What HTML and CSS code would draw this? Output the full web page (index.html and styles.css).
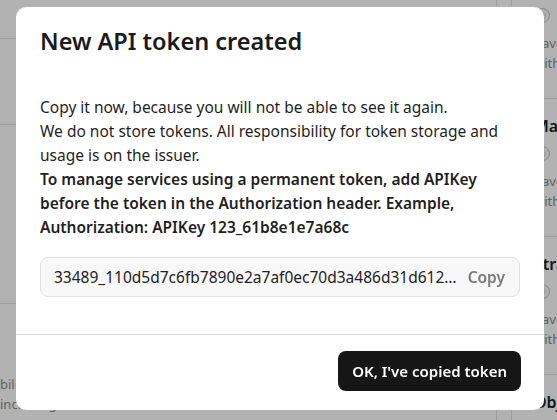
FILE: index.html
```html
<!DOCTYPE html>
<html lang="en">
<head>
<meta charset="utf-8">
<title>New API token created</title>
<link rel="stylesheet" href="styles.css">
</head>
<body>
<div class="page">
  <div class="left-panel">
    <div class="left-row row-a"></div>
    <div class="left-row row-b"></div>
    <div class="left-row row-c"></div>
    <div class="left-row row-d">
      <p class="muted">bility of the token owner</p>
      <p class="muted">including them all</p>
    </div>
  </div>
  <div class="right-col">
    <div class="card card-first">
      <span class="radio"></span>
      <p class="muted">have access</p>
      <p class="muted">with tokens</p>
    </div>
    <div class="card">
      <h3 class="card-title">Manage</h3>
      <span class="radio"></span>
      <p class="muted">have access</p>
      <p class="muted">with tokens</p>
    </div>
    <div class="card">
      <h3 class="card-title">Strategy</h3>
      <span class="radio"></span>
      <p class="muted">have access</p>
      <p class="muted">with tokens</p>
    </div>
    <div class="card">
      <h3 class="card-title">Objects</h3>
      <span class="radio"></span>
    </div>
  </div>
</div>

<div class="overlay">
  <div class="modal" role="dialog" aria-labelledby="modal-title">
    <div class="modal-header">
      <h2 class="modal-title" id="modal-title">New API token created</h2>
    </div>
    <div class="modal-body">
      <p class="note">Copy it now, because you will not be able to see it again.</p>
      <p class="note">We do not store tokens. All responsibility for token storage and usage is on the issuer.</p>
      <p class="note strong">To manage services using a permanent token, add APIKey before the token in the Authorization header. Example, Authorization: APIKey 123_61b8e1e7a68c</p>
      <div class="token-field">
        <span class="token-value">33489_110d5d7c6fb7890e2a7af0ec70d3a486d31d6125e8f0a4b7c9</span>
        <button class="copy-btn" type="button">Copy</button>
      </div>
    </div>
    <div class="modal-footer">
      <button class="primary-btn" type="button">OK, I've copied token</button>
    </div>
  </div>
</div>
</body>
</html>
```

FILE: styles.css
```css
* {
  box-sizing: border-box;
}

html, body {
  margin: 0;
  padding: 0;
  height: 100%;
  overflow: hidden;
}

body {
  font-family: "Noto Sans", "DejaVu Sans", sans-serif;
  background: #ffffff;
  color: #1a1a1a;
}

p, h2, h3 {
  margin: 0;
}

/* ---------- background page ---------- */
.page {
  display: flex;
  gap: 14px;
  height: 100%;
}

.left-panel {
  width: 497px;
  flex: none;
  border-right: 1px solid #e2e2e2;
  display: flex;
  flex-direction: column;
}

.left-row {
  border-bottom: 1px solid #e2e2e2;
  flex: none;
}

.row-a { height: 39px; }
.row-b { height: 86px; }
.row-c { height: 179px; }
.row-d {
  border-bottom: none;
  padding-top: 70px;
}

.muted {
  font-size: 13px;
  line-height: 20px;
  color: #8a8a8a;
  white-space: nowrap;
}

.right-col {
  flex: 1;
  border-left: 1px solid #e2e2e2;
  display: flex;
  flex-direction: column;
  padding-left: 22px;
}

.card {
  height: 138px;
  flex: none;
  border-bottom: 1px solid #e2e2e2;
  padding-top: 16px;
  display: flex;
  flex-direction: column;
  align-items: flex-start;
}

.card-first {
  height: 99px;
  padding-top: 8px;
}

.card-title {
  font-size: 16px;
  line-height: 22px;
  font-weight: 600;
  color: #222;
  white-space: nowrap;
  margin-bottom: 9px;
}

.radio {
  width: 15px;
  height: 15px;
  border-radius: 50%;
  border: 1px solid #c4c4c4;
  background: #e6e6e6;
  box-shadow: inset 0 0 0 3px #fafafa;
  margin-left: 1px;
  margin-bottom: 10px;
}

/* ---------- overlay & modal ---------- */
.overlay {
  position: fixed;
  inset: 0;
  background: rgba(0, 0, 0, 0.3);
}

.modal {
  position: absolute;
  left: 16px;
  top: 7px;
  width: 528px;
  height: 403px;
  background: #ffffff;
  border-radius: 10px;
  display: flex;
  flex-direction: column;
}

.modal-header {
  padding: 18px 24px 0;
}

.modal-title {
  font-size: 23.5px;
  line-height: 32px;
  font-weight: 600;
  color: #1a1a1a;
}

.modal-body {
  padding: 38px 24px 37px;
  flex: 1;
}

.note {
  font-size: 15.5px;
  line-height: 24px;
  color: #1f1f1f;
}

.note.strong {
  font-weight: 600;
}

.token-field {
  margin-top: 18px;
  height: 40px;
  border: 1px solid #e0e0e0;
  border-radius: 8px;
  background: #f8f8f8;
  display: flex;
  align-items: center;
  gap: 8px;
  padding: 0 14px 0 13px;
}

.token-value {
  flex: 1;
  min-width: 0;
  font-size: 15.5px;
  color: #222;
  white-space: nowrap;
  overflow: hidden;
  text-overflow: ellipsis;
}

.copy-btn {
  flex: none;
  border: none;
  background: none;
  padding: 0;
  font-family: inherit;
  font-size: 15.5px;
  font-weight: 600;
  color: #7a7a7a;
  cursor: pointer;
}

.modal-footer {
  border-top: 1px solid #dedede;
  padding: 16px 23px 19px;
  display: flex;
  justify-content: flex-end;
}

.primary-btn {
  height: 40px;
  padding: 0 14px;
  border: none;
  border-radius: 8px;
  background: #161616;
  color: #ffffff;
  font-family: inherit;
  font-size: 15px;
  font-weight: 600;
  cursor: pointer;
}
```
